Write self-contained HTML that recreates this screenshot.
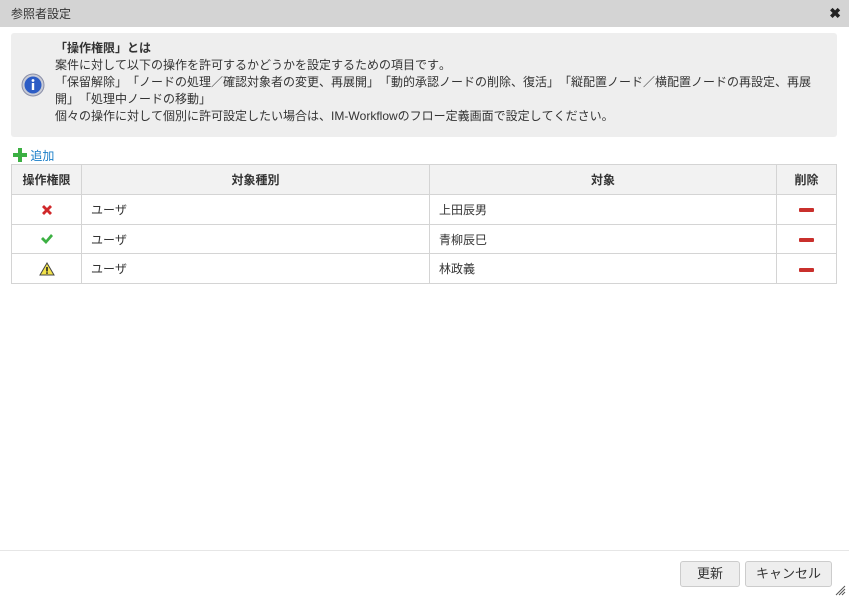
<!DOCTYPE html><html><head><meta charset="utf-8"><style>
*{margin:0;padding:0;box-sizing:border-box}
body{width:849px;height:598px;background:#fff;font-family:"Liberation Sans","Noto Sans CJK JP",sans-serif;font-size:12px;color:#333;position:relative;overflow:hidden;text-spacing-trim:space-all;font-kerning:none}
.title{position:absolute;left:0;top:0;width:849px;height:27px;background:#d4d4d4;padding:5px 11px;font-size:12px;color:#333}
.close{position:absolute;right:8px;top:5px;font-weight:bold;font-size:14px;color:#222}
.info{position:absolute;left:11px;top:33px;width:826px;height:104px;background:#eee;border-radius:3px}
.info .t{position:absolute;left:44px;top:7px;line-height:17px;font-size:12px;color:#333;width:775px;white-space:nowrap}
.info svg{position:absolute;left:10px;top:40px}
.add{position:absolute;left:13px;top:147px;color:#1a7ec8;font-size:12px}
table{position:absolute;left:11px;top:164px;width:826px;border-collapse:collapse}
td,th{border:1px solid #d4d4d4;height:30px;font-size:12px}
th{background:#f2f2f2;font-weight:bold;color:#333}
td{padding-left:9px;color:#333;height:29.7px}
td.c{padding:0;text-align:center}
td.c svg{vertical-align:middle}
.foot{position:absolute;left:0;top:550px;width:849px;border-top:1px solid #e6e6e6}
.btn{position:absolute;top:561px;height:26px;border:1px solid #ccc;border-radius:3px;background:#eee;font-size:13px;text-align:center;line-height:24px;color:#333}
.minus{display:inline-block;width:15px;height:4px;background:#c9302c;border-radius:1px;vertical-align:middle}
</style></head><body>
<div class="title">参照者設定<span class="close">✖</span></div>
<div class="info">
<svg width="24" height="24" viewBox="0 0 24 24"><circle cx="12" cy="12" r="11" fill="#c8cbd6" stroke="#8a8fa8"/><circle cx="12" cy="12" r="8.5" fill="#2c5cc5"/><circle cx="12" cy="7.5" r="1.4" fill="#fff"/><rect x="10.8" y="10" width="2.4" height="7" fill="#fff"/></svg>
<div class="t"><b>「操作権限」とは</b><br>案件に対して以下の操作を許可するかどうかを設定するための項目です。<br>「保留解除」「ノードの処理／確認対象者の変更、再展開」「動的承認ノードの削除、復活」「縦配置ノード／横配置ノードの再設定、再展<br>開」「処理中ノードの移動」<br>個々の操作に対して個別に許可設定したい場合は、IM-Workflowのフロー定義画面で設定してください。</div>
</div>
<div class="add"><svg width="14" height="14" viewBox="0 0 14 14" style="vertical-align:-2px"><path d="M5 0h4v5h5v4H9v5H5V9H0V5h5z" fill="#3cb043"/></svg> 追加</div>
<table>
<tr><th style="width:70px">操作権限</th><th style="width:348px">対象種別</th><th style="width:347px">対象</th><th>削除</th></tr>
<tr><td class="c"><svg width="14" height="14" viewBox="0 0 14 14"><path d="M2 4l2-2 3 3 3-3 2 2-3 3 3 3-2 2-3-3-3 3-2-2 3-3z" fill="#d0282a"/></svg></td><td>ユーザ</td><td>上田辰男</td><td class="c"><span class="minus"></span></td></tr>
<tr><td class="c"><svg width="14" height="14" viewBox="0 0 14 14"><path d="M1 7l2-2 3 3 5-6 2 2-7 8z" fill="#3cb043"/></svg></td><td>ユーザ</td><td>青柳辰巳</td><td class="c"><span class="minus"></span></td></tr>
<tr><td class="c"><svg width="16" height="14" viewBox="0 0 16 14"><path d="M8 1L15 13H1z" fill="#f2e24a" stroke="#444"/><rect x="7.2" y="5" width="1.6" height="4.5" fill="#222"/><rect x="7.2" y="10.3" width="1.6" height="1.5" fill="#222"/></svg></td><td>ユーザ</td><td>林政義</td><td class="c"><span class="minus"></span></td></tr>
</table>
<div class="foot"></div>
<div class="btn" style="left:680px;width:60px">更新</div>
<div class="btn" style="left:745px;width:87px">キャンセル</div>
<svg style="position:absolute;left:834px;top:584px" width="12" height="12"><path d="M2 11L11 2M5 11L11 5M8 11L11 8" stroke="#555"/></svg>
</body></html>
